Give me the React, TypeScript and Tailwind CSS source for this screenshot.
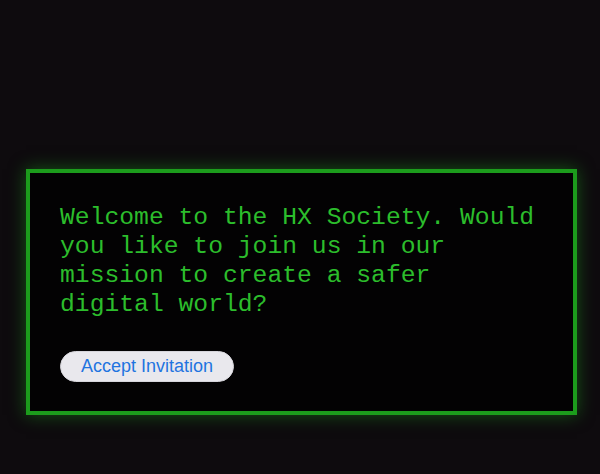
export default function App() {
  return (
    <div className="min-h-[474px] w-full bg-[#0e0b0e] pt-[169px] pl-[26px]">
      <div className="w-[551px] border-4 border-[#1c9c1c] bg-[#030203] p-[30px] pb-[29px] shadow-[0_0_16px_rgba(30,160,30,0.5)]">
        <p className="font-['Liberation_Mono',monospace] text-[24.7px] leading-[29px] text-[#2cbd2c]">
          Welcome to the HX Society. Would you like to join us in our mission to create a safer digital world?
        </p>
        <button className="mt-[32px] h-[31px] rounded-full border border-[#d6d5db] bg-[#e9e8ed] px-[20px] font-['Liberation_Sans',sans-serif] text-[18px] text-[#1f74e0]">
          Accept Invitation
        </button>
      </div>
    </div>
  )
}
